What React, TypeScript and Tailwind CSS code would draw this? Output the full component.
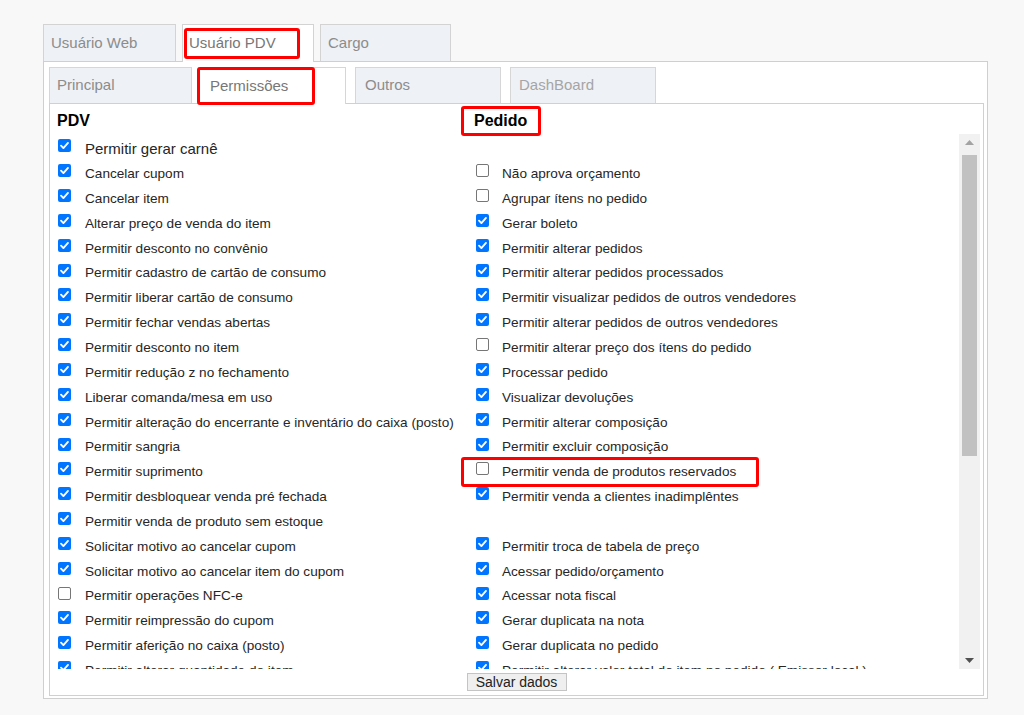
import React from 'react';

type Perm = { label: string; checked: boolean } | null;

const left: Perm[] = [
  { label: 'Permitir gerar carnê', checked: true },
  { label: 'Cancelar cupom', checked: true },
  { label: 'Cancelar item', checked: true },
  { label: 'Alterar preço de venda do item', checked: true },
  { label: 'Permitir desconto no convênio', checked: true },
  { label: 'Permitir cadastro de cartão de consumo', checked: true },
  { label: 'Permitir liberar cartão de consumo', checked: true },
  { label: 'Permitir fechar vendas abertas', checked: true },
  { label: 'Permitir desconto no item', checked: true },
  { label: 'Permitir redução z no fechamento', checked: true },
  { label: 'Liberar comanda/mesa em uso', checked: true },
  { label: 'Permitir alteração do encerrante e inventário do caixa (posto)', checked: true },
  { label: 'Permitir sangria', checked: true },
  { label: 'Permitir suprimento', checked: true },
  { label: 'Permitir desbloquear venda pré fechada', checked: true },
  { label: 'Permitir venda de produto sem estoque', checked: true },
  { label: 'Solicitar motivo ao cancelar cupom', checked: true },
  { label: 'Solicitar motivo ao cancelar item do cupom', checked: true },
  { label: 'Permitir operações NFC-e', checked: false },
  { label: 'Permitir reimpressão do cupom', checked: true },
  { label: 'Permitir aferição no caixa (posto)', checked: true },
  { label: 'Permitir alterar quantidade do item', checked: true },
];

const right: Perm[] = [
  null,
  { label: 'Não aprova orçamento', checked: false },
  { label: 'Agrupar ítens no pedido', checked: false },
  { label: 'Gerar boleto', checked: true },
  { label: 'Permitir alterar pedidos', checked: true },
  { label: 'Permitir alterar pedidos processados', checked: true },
  { label: 'Permitir visualizar pedidos de outros vendedores', checked: true },
  { label: 'Permitir alterar pedidos de outros vendedores', checked: true },
  { label: 'Permitir alterar preço dos ítens do pedido', checked: false },
  { label: 'Processar pedido', checked: true },
  { label: 'Visualizar devoluções', checked: true },
  { label: 'Permitir alterar composição', checked: true },
  { label: 'Permitir excluir composição', checked: true },
  { label: 'Permitir venda de produtos reservados', checked: false },
  { label: 'Permitir venda a clientes inadimplêntes', checked: true },
  null,
  { label: 'Permitir troca de tabela de preço', checked: true },
  { label: 'Acessar pedido/orçamento', checked: true },
  { label: 'Acessar nota fiscal', checked: true },
  { label: 'Gerar duplicata na nota', checked: true },
  { label: 'Gerar duplicata no pedido', checked: true },
  { label: 'Permitir alterar valor total do item no pedido ( Emissor local )', checked: true },
];

const Check: React.FC<{ checked: boolean }> = ({ checked }) =>
  checked ? (
    <span className="w-[13px] h-[13px] mb-[7px] rounded-[2px] bg-[#0075ff] flex items-center justify-center shrink-0">
      <svg width="11" height="11" viewBox="0 0 12 12" fill="none">
        <path d="M2.2 6.2l2.6 2.6 5-5.6" stroke="white" strokeWidth="2" strokeLinecap="round" strokeLinejoin="round" />
      </svg>
    </span>
  ) : (
    <span className="w-[13px] h-[13px] mb-[7px] rounded-[2px] border border-[#767676] bg-white shrink-0"></span>
  );

export default function App() {
  return (
    <div className="min-h-screen bg-[#f8f8f8] font-['Liberation_Sans',Arial,sans-serif] pt-[24px] pl-[43px]">
      <div className="w-[945px]">
        {/* outer tabs */}
        <div className="flex items-start h-[37px]">
          <div className="w-[133px] h-[37px] border-t border-l border-r border-[#d3d3d3] bg-[#eef1f6] text-[15px] text-[#8c8c8c] pl-[7px] flex items-center">Usuário Web</div>
          <div className="ml-[6px] w-[132px] h-[38px] border-t border-l border-r border-[#d3d3d3] bg-white relative z-10 flex items-center pl-px">
            <span className="h-[31px] w-[116px] border-[3px] border-[#ff0000] rounded-[3px] pl-[2px] flex items-center text-[15px] text-[#777]">Usuário PDV</span>
          </div>
          <div className="ml-[6px] w-[131px] h-[37px] border-t border-l border-r border-[#d3d3d3] bg-[#eef1f6] text-[15px] text-[#8c8c8c] pl-[7px] flex items-center">Cargo</div>
        </div>

        {/* outer panel */}
        <div className="border border-[#cfcfcf] bg-white pt-[5px] pl-[5px] pr-[3px] pb-[2px]">
          {/* inner tabs */}
          <div className="flex items-start h-[36px]">
            <div className="w-[143px] h-[36px] border-t border-l border-r border-[#d6d6d6] bg-[#eef1f6] text-[15px] text-[#8c8c8c] pl-[7px] flex items-center">Principal</div>
            <div className="ml-[6px] w-[148px] h-[37px] border-t border-l border-r border-[#d6d6d6] bg-white relative z-10 text-[15px] text-[#777] pl-[11px] flex items-center">
              Permissões
              <span className="absolute -left-[2px] -top-[1px] w-[118px] h-[38px] border-[3px] border-[#ff0000] rounded-[3px]"></span>
            </div>
            <div className="ml-[9px] w-[146px] h-[36px] border-t border-l border-r border-[#d6d6d6] bg-[#eef1f6] text-[15px] text-[#8c8c8c] pl-[9px] flex items-center">Outros</div>
            <div className="ml-[9px] w-[146px] h-[36px] border-t border-l border-r border-[#d6d6d6] bg-[#eef1f6] text-[15px] text-[#a5a5a5] pl-[8px] flex items-center">DashBoard</div>
          </div>

          {/* inner panel */}
          <div className="border border-[#d0d0d0] bg-white w-[935px]">
            {/* headers */}
            <div className="flex items-start h-[30px]">
              <div className="w-[411px] h-[30px] mt-[2px] pl-[7px] flex items-center text-[16px] font-bold text-black">PDV</div>
              <div className="mt-[2px] h-[30px] w-[80px] border-[3px] border-[#ff0000] rounded-[3px] pl-[10px] flex items-center text-[16px] font-bold text-black bg-white relative z-10">Pedido</div>
            </div>

            {/* list + scrollbar */}
            <div className="flex h-[535px]">
              <div className="flex-1 overflow-hidden pt-[3px]">
                {left.map((l, i) => {
                  const r = right[i];
                  return (
                    <div key={i} className="flex h-[24.85px]">
                      <div className="w-[411px] pl-[8px] flex items-center">
                        {l && (
                          <>
                            <Check checked={l.checked} />
                            <span className={`ml-[14px] text-[#262626] whitespace-nowrap ${i === 0 ? 'text-[15px]' : 'text-[13.6px]'}`}>{l.label}</span>
                          </>
                        )}
                      </div>
                      <div className="flex-1 pl-[15px] flex items-center relative">
                        {r && (
                          <>
                            <Check checked={r.checked} />
                            <span className="ml-[13px] text-[13.6px] text-[#262626] whitespace-nowrap">{r.label}</span>
                          </>
                        )}
                        {i === 13 && (
                          <span className="absolute left-0 -top-[3px] w-[298px] h-[30px] border-[3px] border-[#ff0000] rounded-[3px]"></span>
                        )}
                      </div>
                    </div>
                  );
                })}
              </div>
              {/* scrollbar */}
              <div className="w-[21px] mr-[3px] bg-[#f1f1f1] flex flex-col">
                <div className="h-[17px] flex items-center justify-center">
                  <svg width="9" height="5" viewBox="0 0 9 5"><path d="M4.5 0L9 5H0z" fill="#a3a3a3" /></svg>
                </div>
                <div className="mt-[4px] mx-[3px] h-[301px] bg-[#c1c1c1]"></div>
                <div className="flex-1"></div>
                <div className="h-[17px] flex items-center justify-center">
                  <svg width="9" height="5" viewBox="0 0 9 5"><path d="M0 0H9L4.5 5z" fill="#505050" /></svg>
                </div>
              </div>
            </div>

            {/* button */}
            <div className="h-[26px] pt-[4px] flex justify-center">
              <button className="h-[18px] w-[100px] bg-[#efefef] border border-[#c4c4c4] text-[14px] leading-none text-[#222] flex items-center justify-center">Salvar dados</button>
            </div>
          </div>
        </div>
      </div>
    </div>
  );
}
